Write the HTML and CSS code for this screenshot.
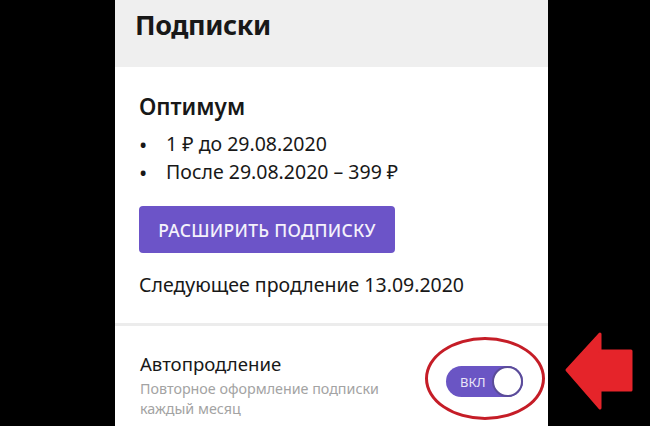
FILE: index.html
```
<!DOCTYPE html>
<html lang="ru">
<head>
    <meta charset="UTF-8">
    <meta name="viewport" content="width=device-width, initial-scale=1.0">
    <title>Подписки</title>
    <link rel="stylesheet" href="styles.css">
</head>
<body>
    <div class="screen">
        <div class="header">
            <h1 class="header-title">Подписки</h1>
        </div>
        <div class="plan">
            <h2 class="plan-name">Оптимум</h2>
            <ul class="plan-prices">
                <li><span class="dot">&bull;</span>1 ₽ до 29.08.2020</li>
                <li><span class="dot">&bull;</span>После 29.08.2020 – 399 ₽</li>
            </ul>
            <button class="btn-upgrade">РАСШИРИТЬ ПОДПИСКУ</button>
            <div class="next-renewal">Следующее продление 13.09.2020</div>
        </div>
        <div class="autorenew">
            <div class="autorenew-text">
                <div class="autorenew-title">Автопродление</div>
                <div class="autorenew-desc">Повторное оформление подписки<br>каждый месяц</div>
            </div>
            <div class="toggle">
                <span class="toggle-label">ВКЛ</span>
                <span class="toggle-knob"></span>
            </div>
        </div>
    </div>

    <!-- annotation marks drawn over the screenshot -->
    <div class="mark-ellipse"></div>
    <svg class="mark-arrow" width="650" height="426" viewBox="0 0 650 426">
        <polygon points="567,370 600,334 600,351 631,351 631,390 600,390 600,408"
                 fill="#e5242a" stroke="#e5242a" stroke-width="3" stroke-linejoin="round"/>
    </svg>
</body>
</html>
```

FILE: styles.css
```
html, body {
    margin: 0;
    padding: 0;
}
body {
    width: 650px;
    height: 426px;
    overflow: hidden;
    background-color: #000;
    font-family: "Noto Sans", "Open Sans", sans-serif;
    color: #181818;
    position: relative;
}
.screen {
    margin-left: 115px;
    width: 433px;
    height: 426px;
    background-color: #fff;
}
.header {
    height: 67px;
    box-sizing: border-box;
    padding: 7px 20px 0;
    background-color: #efefef;
}
.header-title {
    margin: 0;
    font-size: 27px;
    line-height: 36px;
    font-weight: 700;
    letter-spacing: -0.4px;
}
.plan {
    padding-top: 26px;
}
.plan-name {
    margin: 0 0 0 24px;
    font-size: 22.5px;
    line-height: 28px;
    font-weight: 600;
}
.plan-prices {
    list-style: none;
    margin: 9px 0 0 24px;
    padding: 0;
    font-size: 19.5px;
    line-height: 28px;
}
.plan-prices li {
    display: flex;
}
.dot {
    width: 27px;
    font-size: 22px;
}
.btn-upgrade {
    display: block;
    margin: 20px 0 0 24px;
    width: 256px;
    height: 47px;
    border: none;
    border-radius: 4px;
    background-color: #6c54c8;
    color: #f4f1fb;
    font-family: inherit;
    font-size: 17.5px;
    font-weight: 500;
    letter-spacing: 0.3px;
    padding: 0;
}
.next-renewal {
    margin-top: 18px;
    padding: 0 0 24px 24px;
    font-size: 19.5px;
    line-height: 28px;
    border-bottom: 3px solid #ececec;
}
.autorenew {
    display: flex;
    justify-content: space-between;
    padding: 26px 25px 0 25px;
}
.autorenew-title {
    font-size: 18.6px;
    line-height: 24px;
}
.autorenew-desc {
    margin-top: 3px;
    font-size: 14.3px;
    line-height: 20px;
    color: #a3a3a3;
}
.toggle {
    margin-top: 14px;
    width: 77px;
    height: 31px;
    border-radius: 16px;
    background-color: #6a55c4;
    display: flex;
    align-items: center;
    justify-content: space-between;
    padding-left: 14px;
    box-sizing: border-box;
}
.toggle-label {
    font-size: 13px;
    color: #ebe6f8;
}
.toggle-knob {
    width: 31px;
    height: 31px;
    box-sizing: border-box;
    border-radius: 50%;
    border: 2px solid #5b4c99;
    background-color: #fff;
}
.mark-ellipse {
    position: absolute;
    left: 425px;
    top: 337px;
    width: 120px;
    height: 83px;
    box-sizing: border-box;
    border: 3.5px solid #c51d27;
    border-radius: 50%;
}
.mark-arrow {
    position: absolute;
    left: 0;
    top: 0;
}
```
